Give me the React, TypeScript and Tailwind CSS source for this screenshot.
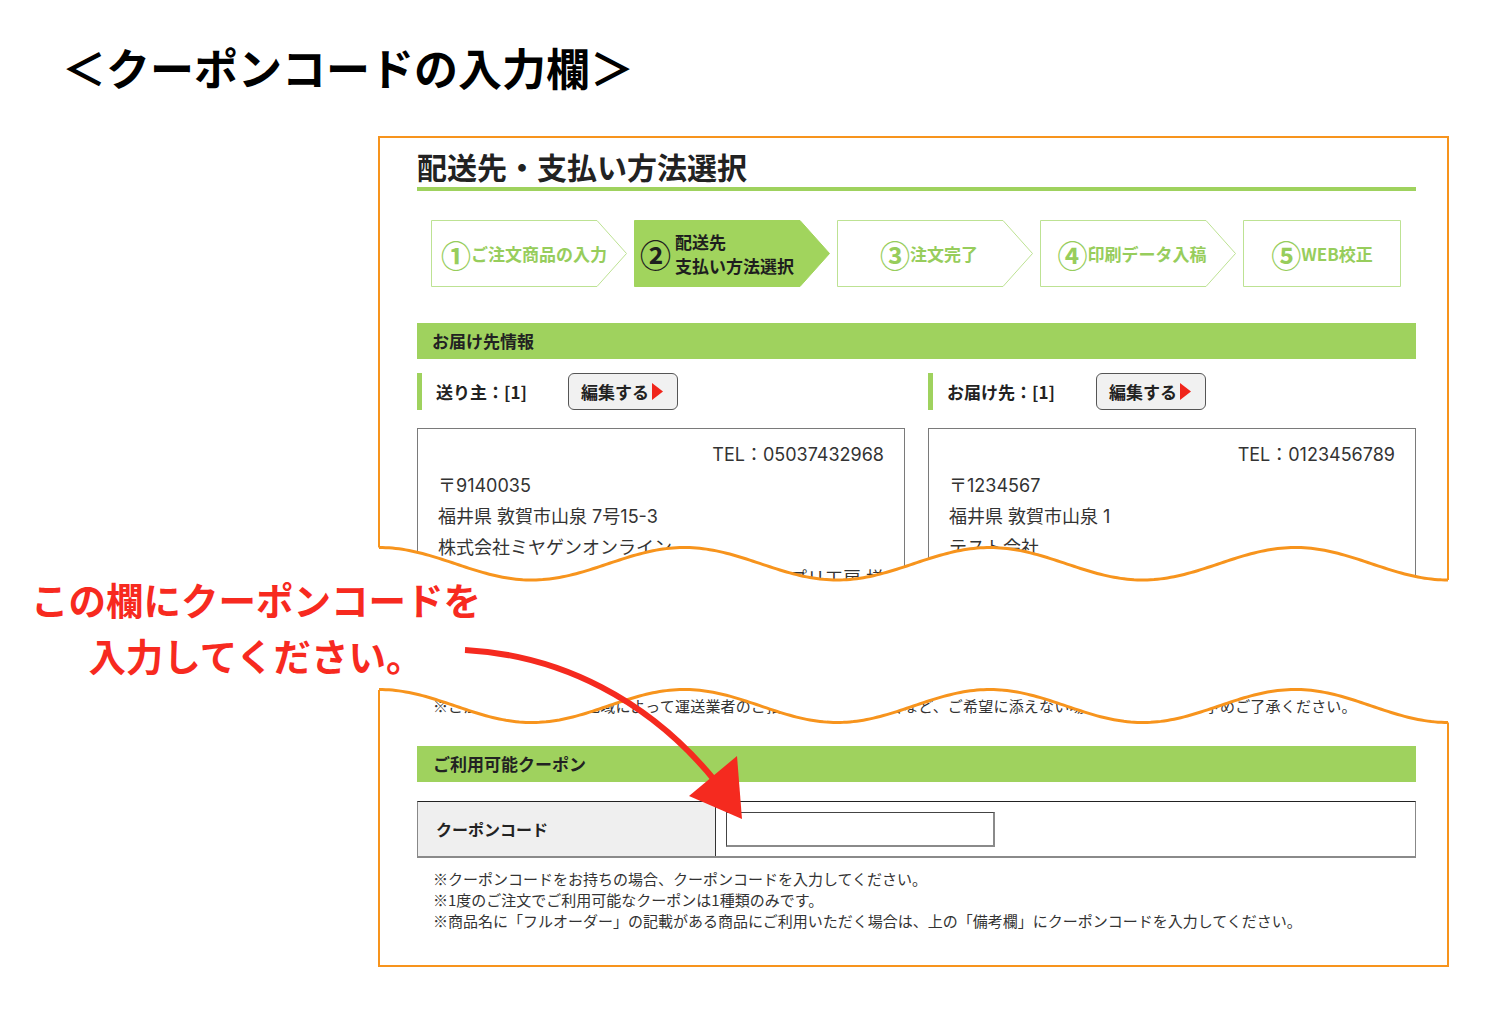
import React from "react";

type Pt = [number, number];

function wavePts(x0: number, x1: number, yc: number, amp: number, period: number, n = 320): Pt[] {
  const pts: Pt[] = [];
  for (let i = 0; i <= n; i++) {
    const x = x0 + ((x1 - x0) * i) / n;
    const y = yc - amp * Math.cos((2 * Math.PI * (x - x0)) / period);
    pts.push([x, y]);
  }
  return pts;
}

const toD = (pts: Pt[]) => pts.map((p, i) => `${i === 0 ? "M" : "L"}${p[0].toFixed(2)},${p[1].toFixed(2)}`).join(" ");
const joinPts = (pts: Pt[]) => pts.map((p) => `L${p[0].toFixed(2)},${p[1].toFixed(2)}`).join(" ");

// top piece overlay: svg spans page x 377..1450, y 537..583
const PERIOD = (2 * (1448 - 379)) / 7;
const TOP = wavePts(2, 1071, 26.75, 16.25, PERIOD);
const TOP_STROKE = toD(TOP);
const TOP_FILL = `M0,${TOP[0][1]} ${joinPts(TOP)} L1073,${TOP[TOP.length - 1][1]} L1073,44.5 L0,44.5 Z`;

// bottom piece overlay: svg spans page x 377..1450, y 682..730
const BOT = wavePts(2, 1071, 24, 16.5, PERIOD);
const BOT_STROKE = toD(BOT);
const BOT_FILL = `M0,0 L0,${BOT[0][1]} ${joinPts(BOT)} L1073,${BOT[BOT.length - 1][1]} L1073,0 Z`;

function StepShape({ w, arrow, filled }: { w: number; arrow: boolean; filled: boolean }) {
  const h = 67;
  const pts = arrow
    ? `0.5,0.5 ${w - 30},0.5 ${w - 0.5},${h / 2} ${w - 30},${h - 0.5} 0.5,${h - 0.5}`
    : `0.5,0.5 ${w - 0.5},0.5 ${w - 0.5},${h - 0.5} 0.5,${h - 0.5}`;
  return (
    <svg className="absolute inset-0" width={w} height={h} viewBox={`0 0 ${w} ${h}`}>
      <polygon points={pts} fill={filled ? "#a1d45d" : "#ffffff"} stroke={filled ? "#a1d45d" : "#bde293"} strokeWidth="1" />
    </svg>
  );
}

function EditButton() {
  return (
    <div className="ml-[41px] flex h-[37px] w-[110px] items-center rounded-[6px] border border-[#555] bg-[#f1f1f1] pl-[12px]">
      <span className="text-[17px] font-bold leading-none text-[#222]">編集する</span>
      <svg width="13" height="17" viewBox="0 0 13 17" className="ml-[2px]">
        <polygon points="1,0 12,8.5 1,17" fill="#f0251b" />
      </svg>
    </div>
  );
}

function AddressBox({ tel, zip, addr, name, extra }: { tel: string; zip: string; addr: string; name: string; extra: string }) {
  return (
    <div className="h-[153px] border border-[#7a7a7a] px-[20px] pt-[10px] font-['Inter','Noto_Sans_CJK_JP',sans-serif] text-[18px] leading-[31px] text-[#333]">
      <div className="text-right">{tel}</div>
      <div>{zip}</div>
      <div>{addr}</div>
      <div>{name}</div>
      <div className="text-right">{extra}</div>
    </div>
  );
}

export default function App() {
  return (
    <div className="relative h-[1009px] w-[1490px] overflow-hidden bg-white font-['Noto_Sans_CJK_JP',sans-serif] text-[#222]">
      <h1 className="pl-[62px] pt-[42px] text-[44px] font-bold leading-[50px] text-black">＜クーポンコードの入力欄＞</h1>

      {/* top piece */}
      <div className="relative ml-[378px] mt-[44px] h-[445px] w-[1071px] border-x-2 border-t-2 border-[#f7941d]">
        <div className="h-full overflow-hidden pl-[37px] pr-[31px]">
          <div className="pt-[10px] text-[30px] font-bold leading-[36px] text-[#222]">配送先・支払い方法選択</div>
          <div className="mt-[3px] h-[4px] bg-[#9fd25e]" />

          <div className="mt-[29px] flex gap-[7px] pl-[14px]">
            <div className="relative h-[67px] w-[196px]">
              <StepShape w={196} arrow filled={false} />
              <div className="relative flex h-full items-center justify-center pr-[10px] text-[#97cd5c]">
                <span className="text-[30px] font-bold leading-none">①</span>
                <span className="text-[17px] font-bold leading-none">ご注文商品の入力</span>
              </div>
            </div>
            <div className="relative h-[67px] w-[196px]">
              <StepShape w={196} arrow filled />
              <div className="relative flex h-full items-center pl-[6px] text-[#1e1e1e]">
                <span className="text-[31px] font-bold leading-none">②</span>
                <div className="ml-[4px] text-[17px] font-bold leading-[24px]">
                  <div>配送先</div>
                  <div>支払い方法選択</div>
                </div>
              </div>
            </div>
            <div className="relative h-[67px] w-[196px]">
              <StepShape w={196} arrow filled={false} />
              <div className="relative flex h-full items-center justify-center pr-[12px] text-[#97cd5c]">
                <span className="text-[30px] font-bold leading-none">③</span>
                <span className="text-[17px] font-bold leading-none">注文完了</span>
              </div>
            </div>
            <div className="relative h-[67px] w-[196px]">
              <StepShape w={196} arrow filled={false} />
              <div className="relative flex h-full items-center justify-center pr-[12px] text-[#97cd5c]">
                <span className="text-[30px] font-bold leading-none">④</span>
                <span className="text-[17px] font-bold leading-none">印刷データ入稿</span>
              </div>
            </div>
            <div className="relative h-[67px] w-[158px]">
              <StepShape w={158} arrow={false} filled={false} />
              <div className="relative flex h-full items-center justify-center text-[#97cd5c]">
                <span className="text-[30px] font-bold leading-none">⑤</span>
                <span className="text-[17px] font-bold leading-none">WEB校正</span>
              </div>
            </div>
          </div>

          <div className="mt-[36px] flex h-[36px] items-center bg-[#9fd25e] pl-[15px] text-[17px] font-bold text-[#222]">お届け先情報</div>

          <div className="mt-[14px] grid grid-cols-2 gap-x-[23px]">
            <div className="flex h-[37px] items-center">
              <div className="h-full w-[5px] bg-[#9fd25e]" />
              <span className="ml-[14px] text-[17px] font-bold leading-none">送り主：[1]</span>
              <EditButton />
            </div>
            <div className="flex h-[37px] items-center">
              <div className="h-full w-[5px] bg-[#9fd25e]" />
              <span className="ml-[14px] text-[17px] font-bold leading-none">お届け先：[1]</span>
              <EditButton />
            </div>
          </div>

          <div className="mt-[18px] grid grid-cols-2 gap-x-[23px]">
            <AddressBox tel="TEL：05037432968" zip="〒9140035" addr="福井県 敦賀市山泉 7号15-3" name="株式会社ミヤゲンオンライン" extra="プリ工房 様" />
            <AddressBox tel="TEL：0123456789" zip="〒1234567" addr="福井県 敦賀市山泉 1" name="テスト会社" extra="" />
          </div>
        </div>

        <svg className="absolute -bottom-[2px] -left-[3px] overflow-visible" width="1073" height="46" viewBox="0 0 1073 46">
          <path d={TOP_FILL} fill="#ffffff" />
          <path d={TOP_STROKE} fill="none" stroke="#f7941d" strokeWidth="3" />
        </svg>
      </div>

      {/* annotation */}
      <div className="h-[109px]">
        <div className="relative -top-[10px] ml-[30px] w-[452px] text-center text-[37.5px] font-bold leading-[56px] text-[#f72a1f]">
          <div className="whitespace-nowrap">この欄にクーポンコードを</div>
          <div className="whitespace-nowrap">入力してください。</div>
        </div>
      </div>

      {/* bottom piece */}
      <div className="relative ml-[378px] h-[277px] w-[1071px] border-x-2 border-b-2 border-[#f7941d]">
        <div className="h-full overflow-hidden pl-[37px] pr-[31px] pt-[5px]">
          <div className="whitespace-nowrap pl-[16px] text-[15px] leading-[21px] tracking-[0.2px] text-[#333]">
            ※ご注文内容やお届け地域によって運送業者のご指定ができない場合など、ご希望に添えない場合がございます。予めご了承ください。
          </div>

          <div className="mt-[30px] flex h-[36px] items-center bg-[#9fd25e] pl-[16px] text-[17px] font-bold text-[#222]">ご利用可能クーポン</div>

          <div className="mt-[19px] flex h-[57px] border-x border-b-2 border-t border-x-[#888] border-b-[#8a8a8a] border-t-[#222]">
            <div className="flex w-[298px] items-center border-r border-r-[#333] bg-[#efefef] pl-[18px] text-[16px] font-bold">クーポンコード</div>
            <div className="flex flex-1 items-center pl-[10px]">
              <div className="h-[35px] w-[269px] border-b-2 border-l border-r-2 border-t border-b-[#8a8a8a] border-l-[#444] border-r-[#8a8a8a] border-t-[#444] bg-white" />
            </div>
          </div>

          <div className="mt-[10px] pl-[16px] text-[15px] leading-[21px] text-[#333]">
            <div className="whitespace-nowrap">※クーポンコードをお持ちの場合、クーポンコードを入力してください。</div>
            <div className="whitespace-nowrap">※1度のご注文でご利用可能なクーポンは1種類のみです。</div>
            <div className="whitespace-nowrap">※商品名に「フルオーダー」の記載がある商品にご利用いただく場合は、上の「備考欄」にクーポンコードを入力してください。</div>
          </div>
        </div>

        <svg className="absolute -left-[3px] -top-[8px] overflow-visible" width="1073" height="48" viewBox="0 0 1073 48">
          <path d={BOT_FILL} fill="#ffffff" />
          <path d={BOT_STROKE} fill="none" stroke="#f7941d" strokeWidth="3" />
        </svg>
      </div>

      {/* red arrow */}
      <svg className="pointer-events-none absolute left-0 top-0 z-20" width="1490" height="1009" viewBox="0 0 1490 1009">
        <path d="M465,650 C560,655 650,700 716,782" fill="none" stroke="#f52a1f" strokeWidth="6" />
        <polygon points="689,796 737,756 742,819" fill="#f52a1f" />
      </svg>
    </div>
  );
}
